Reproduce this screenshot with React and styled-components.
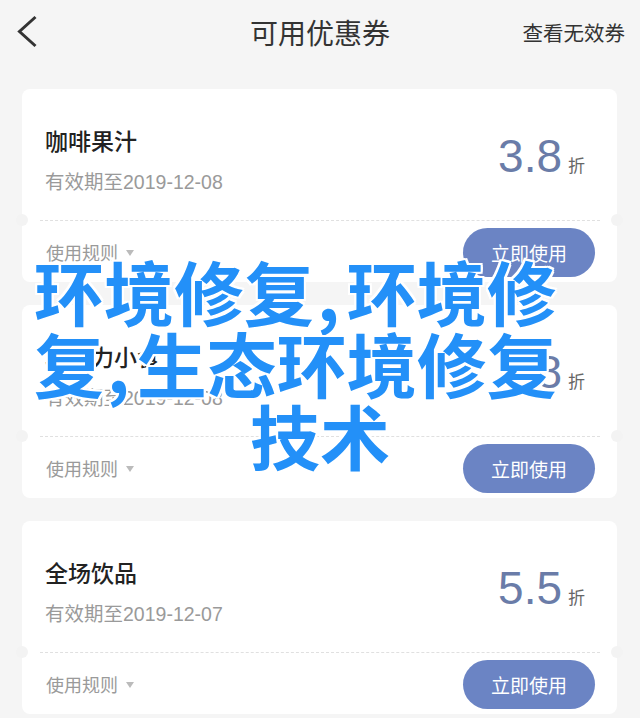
import React from "react";
import styled, { createGlobalStyle } from "styled-components";

const Global = createGlobalStyle`
  html, body { margin: 0; padding: 0; background: #f5f5f5; }
  body { font-family: "Liberation Sans", "Noto Sans CJK SC", sans-serif; }
  * { box-sizing: border-box; }
`;

const Page = styled.div`
  position: relative;
  width: 640px;
  height: 718px;
  overflow: hidden;
  background: #f5f5f5;
`;

const Header = styled.header`
  height: 64px;
  display: grid;
  grid-template-columns: 1fr auto 1fr;
  align-items: center;
`;

const Back = styled.div`
  padding-left: 17px;
  display: flex;
  align-items: center;
`;

const Title = styled.h1`
  margin: 0;
  font-family: "Noto Sans CJK SC", sans-serif;
  font-size: 28px;
  font-weight: 400;
  color: #333;
`;

const HeaderLink = styled.div`
  justify-self: end;
  padding-right: 15px;
  font-family: "Noto Sans CJK SC", sans-serif;
  font-size: 20.5px;
  color: #333;
`;

const List = styled.div`
  display: flex;
  flex-direction: column;
  gap: 23px;
  padding: 25px 23px 0 22px;
`;

const Card = styled.div`
  position: relative;
  height: 193px;
  background: #fff;
  border-radius: 8px;
  display: flex;
  flex-direction: column;
  &::before, &::after {
    content: "";
    position: absolute;
    top: 125px;
    width: 12px;
    height: 12px;
    border-radius: 50%;
    background: #f3f3f3;
  }
  &::before { left: -6px; }
  &::after { right: -6px; }
`;

const Top = styled.div`
  height: 131px;
  display: flex;
  justify-content: space-between;
  padding: 0 32px 0 23px;
`;

const Info = styled.div`
  display: flex;
  flex-direction: column;
  padding-top: 36px;
  gap: 14px;
`;

const Name = styled.div`
  font-family: "Noto Sans CJK SC", sans-serif;
  font-size: 23px;
  line-height: 30px;
  font-weight: 500;
  color: #222;
`;

const Expire = styled.div`
  font-size: 19.5px;
  line-height: 26px;
  color: #9a9a9a;
`;

const Discount = styled.div`
  display: flex;
  align-items: baseline;
  gap: 6px;
  padding-top: 41px;
`;

const Amount = styled.span`
  font-size: 46px;
  line-height: 52px;
  color: #6a7ca8;
`;

const Unit = styled.span`
  font-family: "Noto Sans CJK SC", sans-serif;
  font-size: 17px;
  color: #666;
`;

const Divider = styled.div`
  margin: 0 17px 0 18px;
  border-top: 1px dashed #e0e0e0;
`;

const Bottom = styled.div`
  flex: 1;
  display: flex;
  align-items: center;
  justify-content: space-between;
  padding: 0 22px 0 24px;
`;

const Rules = styled.div`
  display: flex;
  align-items: center;
  gap: 8px;
  font-family: "Noto Sans CJK SC", sans-serif;
  font-size: 18px;
  color: #9a9a9a;
`;

const Caret = styled.span`
  width: 0;
  height: 0;
  border-left: 4px solid transparent;
  border-right: 4px solid transparent;
  border-top: 6px solid #bbb;
  margin-top: 2px;
`;

const UseButton = styled.button`
  width: 132px;
  height: 49px;
  border: none;
  border-radius: 25px;
  background: #6b84c4;
  color: #fff;
  font-family: "Noto Sans CJK SC", sans-serif;
  font-size: 19px;
  padding: 0;
  margin-top: 1px;
`;

const Overlay = styled.div`
  position: absolute;
  top: 255px;
  left: 0;
  width: 640px;
  font-family: "Noto Sans CJK SC", sans-serif;
  font-weight: 700;
  font-size: 70px;
  line-height: 72px;
  color: #2390f8;
  text-shadow:
    2px 0 0 #fff, -2px 0 0 #fff, 0 2px 0 #fff, 0 -2px 0 #fff,
    2px 2px 0 #fff, -2px -2px 0 #fff, 2px -2px 0 #fff, -2px 2px 0 #fff;
  pointer-events: none;
`;

const OverlayLine = styled.div`
  white-space: nowrap;
  text-align: ${(p) => (p.$center ? "center" : "left")};
  padding-left: ${(p) => (p.$center ? "0" : "34px")};
`;

const Comma = styled.span`
  padding: 0 7px 0 3px;
`;

const coupons = [
  { name: "咖啡果汁", date: "2019-12-08", amount: "3.8" },
  { name: "巧克力小食", date: "2019-12-08", amount: "4.8" },
  { name: "全场饮品", date: "2019-12-07", amount: "5.5" },
];

export default function App() {
  return (
    <Page>
      <Global />
      <Header>
        <Back>
          <svg width="22" height="34" viewBox="0 0 22 34">
            <polyline points="18.5,2 2.5,16.5 18.5,31" fill="none" stroke="#333" strokeWidth="3" />
          </svg>
        </Back>
        <Title>可用优惠券</Title>
        <HeaderLink>查看无效券</HeaderLink>
      </Header>
      <List>
        {coupons.map((c) => (
          <Card key={c.name}>
            <Top>
              <Info>
                <Name>{c.name}</Name>
                <Expire>有效期至{c.date}</Expire>
              </Info>
              <Discount>
                <Amount>{c.amount}</Amount>
                <Unit>折</Unit>
              </Discount>
            </Top>
            <Divider />
            <Bottom>
              <Rules>
                使用规则
                <Caret />
              </Rules>
              <UseButton>立即使用</UseButton>
            </Bottom>
          </Card>
        ))}
      </List>
      <Overlay>
        <OverlayLine>环境修复<Comma>,</Comma>环境修</OverlayLine>
        <OverlayLine>复<Comma>,</Comma>生态环境修复</OverlayLine>
        <OverlayLine $center>技术</OverlayLine>
      </Overlay>
    </Page>
  );
}
